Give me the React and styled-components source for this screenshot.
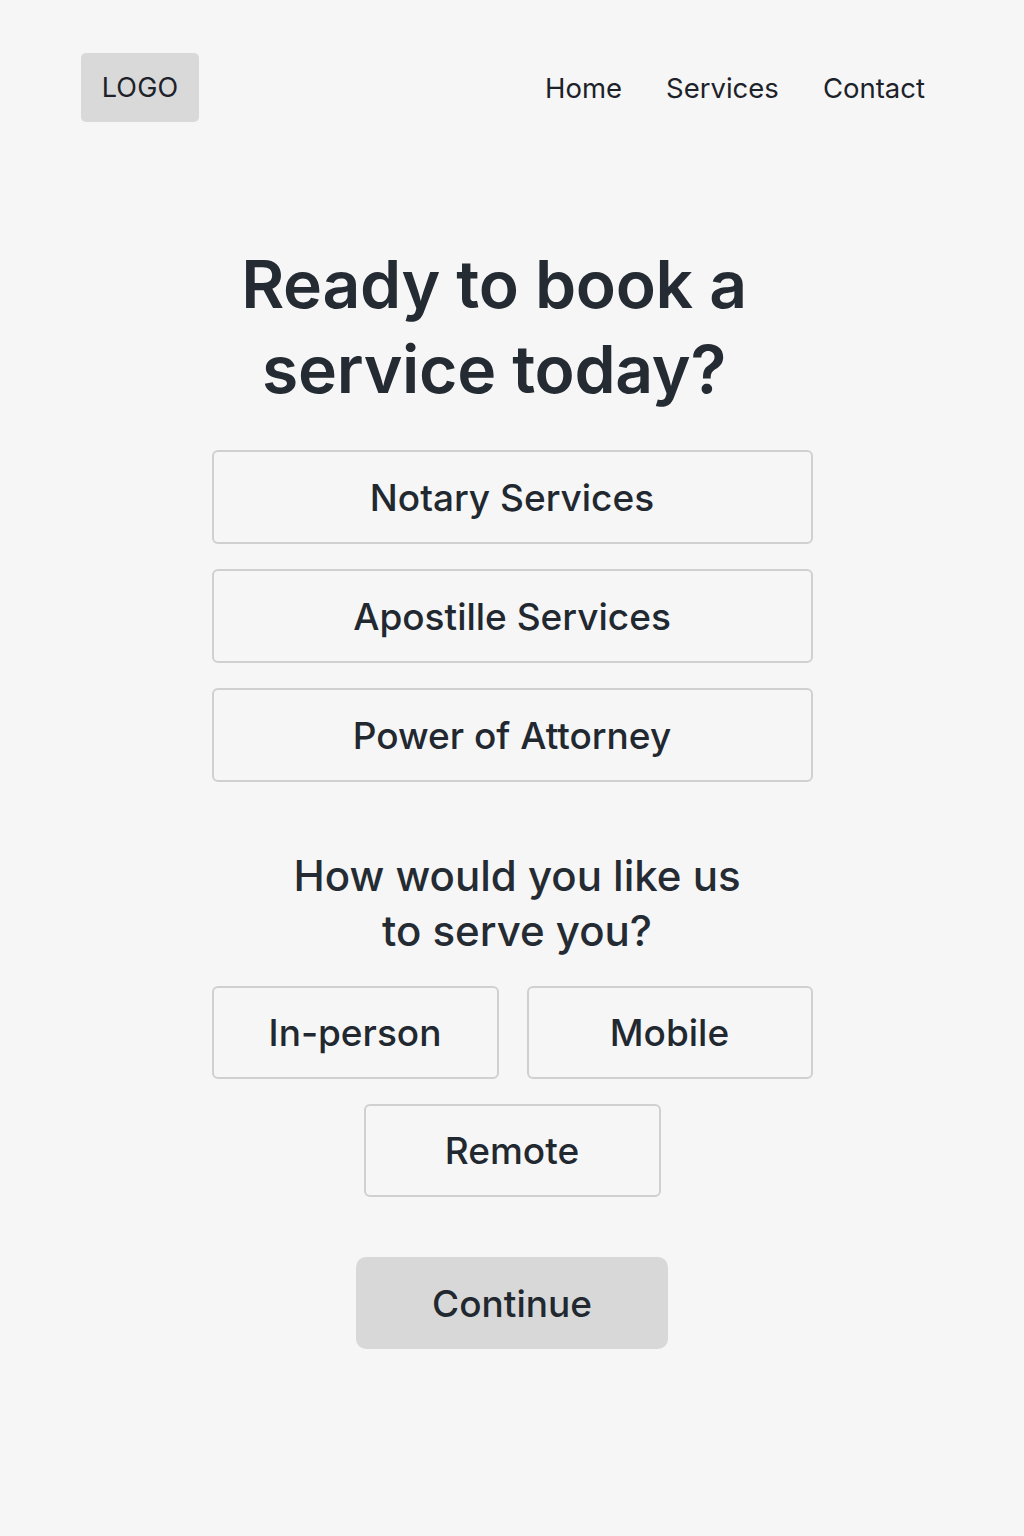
import React from "react";
import styled, { createGlobalStyle } from "styled-components";

const Global = createGlobalStyle`
  html, body { margin: 0; padding: 0; background: #f6f6f6; }
  body { font-family: Inter, "Noto Sans", "Liberation Sans", sans-serif; color: #252b33; }
  * { box-sizing: border-box; }
`;

const Page = styled.div`
  width: 1024px;
  min-height: 1536px;
  background: #f6f6f6;
  display: flex;
  flex-direction: column;
`;

const Header = styled.header`
  display: flex;
  align-items: center;
  justify-content: space-between;
  padding: 53px 99px 0 81px;
`;

const Logo = styled.div`
  width: 118px;
  height: 69px;
  background: #d9d9d9;
  border-radius: 5px;
  display: flex;
  align-items: center;
  justify-content: center;
  font-size: 27px;
  font-weight: 400;
  color: #1d222a;
  letter-spacing: 0.2px;
`;

const Nav = styled.nav`
  display: flex;
  gap: 44px;
`;

const NavLink = styled.a`
  font-size: 27.5px;
  font-weight: 400;
  color: #1d222a;
  text-decoration: none;
`;

const Main = styled.main`
  display: flex;
  flex-direction: column;
  align-items: center;
  padding-top: 120px;
`;

const Title = styled.h1`
  margin: 0 0 38px;
  font-size: 66px;
  line-height: 85px;
  font-weight: 600;
  text-align: center;
  letter-spacing: -0.3px;
  padding-right: 36px;
  color: #252b33;
`;

const OptionList = styled.div`
  display: flex;
  flex-direction: column;
  gap: 25px;
  width: 601px;
`;

const Option = styled.button`
  height: ${(p) => p.$h || 94}px;
  width: ${(p) => (p.$w ? `${p.$w}px` : "100%")};
  background: #f6f6f6;
  border: 2px solid #d0d0d0;
  border-radius: 6px;
  font-family: inherit;
  font-size: 37px;
  font-weight: 500;
  color: #222830;
  cursor: pointer;
  padding: 0;
`;

const SubTitle = styled.h2`
  margin: 66px 0 28px;
  font-size: 42px;
  line-height: 55px;
  font-weight: 500;
  text-align: center;
  padding-left: 10px;
  color: #252b33;
`;

const ModeGrid = styled.div`
  display: flex;
  flex-wrap: wrap;
  justify-content: center;
  column-gap: 28px;
  row-gap: 25px;
  width: 601px;
`;

const ContinueButton = styled.button`
  margin-top: 60px;
  width: 312px;
  height: 92px;
  background: #d8d8d8;
  border: none;
  border-radius: 10px;
  font-family: inherit;
  font-size: 37px;
  font-weight: 500;
  color: #222830;
  cursor: pointer;
`;

export default function App() {
  return (
    <>
      <Global />
      <Page>
        <Header>
          <Logo>LOGO</Logo>
          <Nav>
            <NavLink href="#">Home</NavLink>
            <NavLink href="#">Services</NavLink>
            <NavLink href="#">Contact</NavLink>
          </Nav>
        </Header>
        <Main>
          <Title>
            Ready to book a
            <br />
            service today?
          </Title>
          <OptionList>
            <Option>Notary Services</Option>
            <Option>Apostille Services</Option>
            <Option>Power of Attorney</Option>
          </OptionList>
          <SubTitle>
            How would you like us
            <br />
            to serve you?
          </SubTitle>
          <ModeGrid>
            <Option $w={287} $h={93}>In-person</Option>
            <Option $w={286} $h={93}>Mobile</Option>
            <Option $w={297} $h={93}>Remote</Option>
          </ModeGrid>
          <ContinueButton>Continue</ContinueButton>
        </Main>
      </Page>
    </>
  );
}
